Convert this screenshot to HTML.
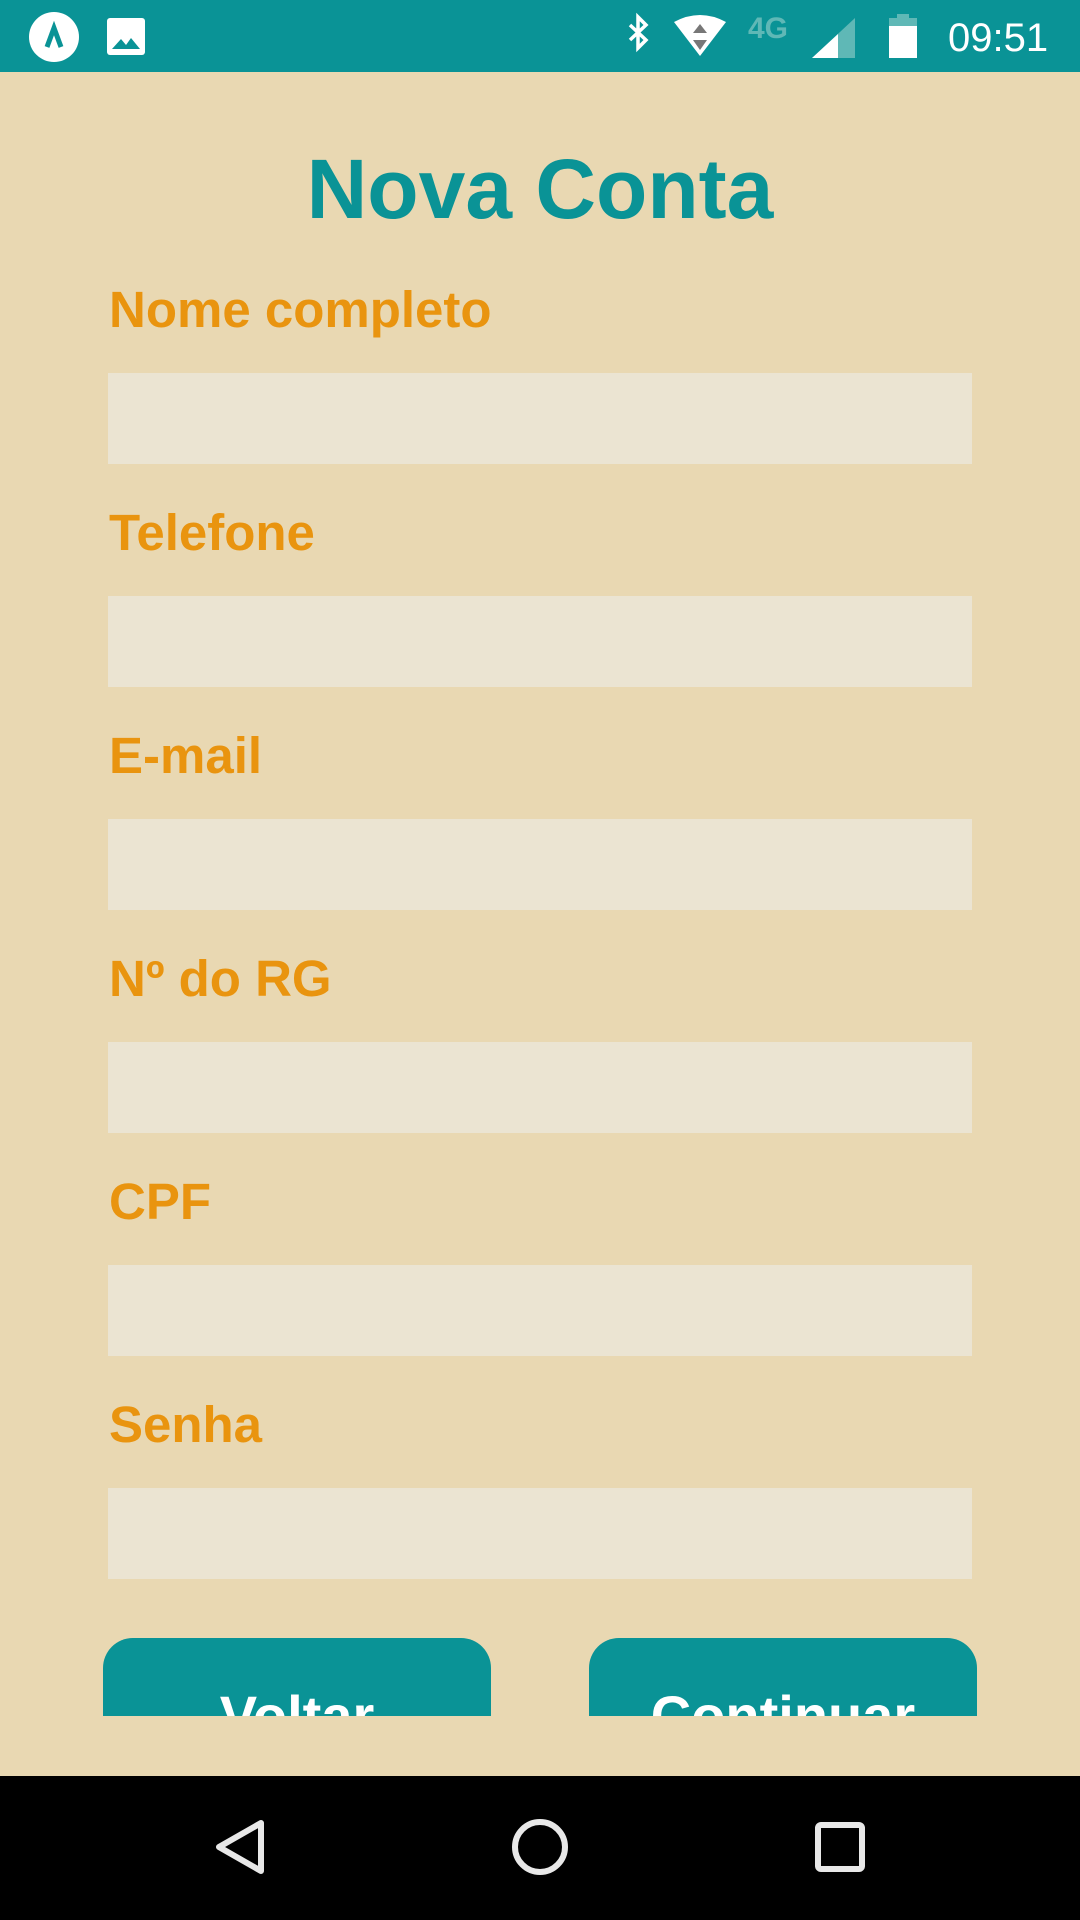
<!DOCTYPE html>
<html><head><meta charset="utf-8"><style>
html,body{margin:0;padding:0;width:1080px;height:1920px;overflow:hidden;background:#e9d8b2;font-family:"Liberation Sans",Roboto,sans-serif;}
.sb{position:absolute;left:0;top:0;width:1080px;height:72px;background:#0a9396;}
.nav{position:absolute;left:0;top:1776px;width:1080px;height:144px;background:#000;}
h1{position:absolute;left:0;width:1080px;top:134px;margin:0;text-align:center;color:#0a9396;font-size:84px;font-weight:bold;line-height:110px;}
.lbl{position:absolute;left:109px;color:#e9940f;font-weight:bold;font-size:51px;line-height:60px;}
.inp{position:absolute;left:108px;width:864px;height:91px;background:#ebe4d2;}
.btn{position:absolute;top:1638px;height:78px;width:388px;background:#0a9396;border-radius:30px 30px 0 0;overflow:hidden;color:#fff;font-weight:bold;font-size:56px;text-align:center;}
.btn span{position:absolute;left:0;right:0;top:48px;line-height:60px;}
</style></head><body>
<div class="sb">
 <svg width="1080" height="72" style="position:absolute;left:0;top:0">
  <circle cx="54" cy="37" r="25" fill="#fff"/>
  <path d="M47 47 L54 28 L61 47" stroke="#0a9396" stroke-width="5" fill="none"/>
  <rect x="107" y="18" width="38" height="37" rx="3" fill="#fff"/>
  <path d="M112 49 L121 39 L126 45 L131 38 L140 49 Z" fill="#0a9396"/>
  <path d="M630 25 L646 40 L638 48 L638 17 L646 25 L630 40" stroke="#fff" stroke-width="3.5" fill="none"/>
  <path d="M674 22 Q700 8 726 22 L700 56 Z" fill="#fff"/>
  <path d="M700 24 L707 33 L693 33 Z M700 50 L707 40 L693 40 Z" fill="#777"/>
  <text x="748" y="38" fill="#5fb8b6" font-family="Liberation Sans" font-weight="bold" font-size="30">4G</text>
  <path d="M812 58 L855 58 L855 18 Z" fill="#5fb8b6"/>
  <path d="M812 58 L838 58 L838 34 Z" fill="#fff"/>
  <rect x="889" y="18" width="28" height="40" fill="#fff"/>
  <rect x="889" y="18" width="28" height="8" fill="#5fb8b6"/>
  <rect x="897" y="14" width="12" height="5" fill="#5fb8b6"/>
  <text x="948" y="51" fill="#fff" font-family="Liberation Sans" font-size="40">09:51</text>
 </svg>
</div>
<h1>Nova Conta</h1>
<div class="lbl" style="top:280px">Nome completo</div>
<div class="inp" style="top:373px"></div>
<div class="lbl" style="top:503px">Telefone</div>
<div class="inp" style="top:596px"></div>
<div class="lbl" style="top:726px">E-mail</div>
<div class="inp" style="top:819px"></div>
<div class="lbl" style="top:949px">Nº do RG</div>
<div class="inp" style="top:1042px"></div>
<div class="lbl" style="top:1172px">CPF</div>
<div class="inp" style="top:1265px"></div>
<div class="lbl" style="top:1395px">Senha</div>
<div class="inp" style="top:1488px"></div>
<div class="btn" style="left:103px"><span>Voltar</span></div>
<div class="btn" style="left:589px"><span>Continuar</span></div>
<div class="nav">
 <svg width="1080" height="144" style="position:absolute;left:0;top:0">
  <path d="M261 47 L261 95 L219 71 Z" stroke="#e8e8e8" stroke-width="6" fill="none" stroke-linejoin="round"/>
  <circle cx="540" cy="71" r="25" stroke="#e8e8e8" stroke-width="6" fill="none"/>
  <rect x="818" y="49" width="44" height="44" rx="3" stroke="#e8e8e8" stroke-width="6" fill="none"/>
 </svg>
</div>
</body></html>
